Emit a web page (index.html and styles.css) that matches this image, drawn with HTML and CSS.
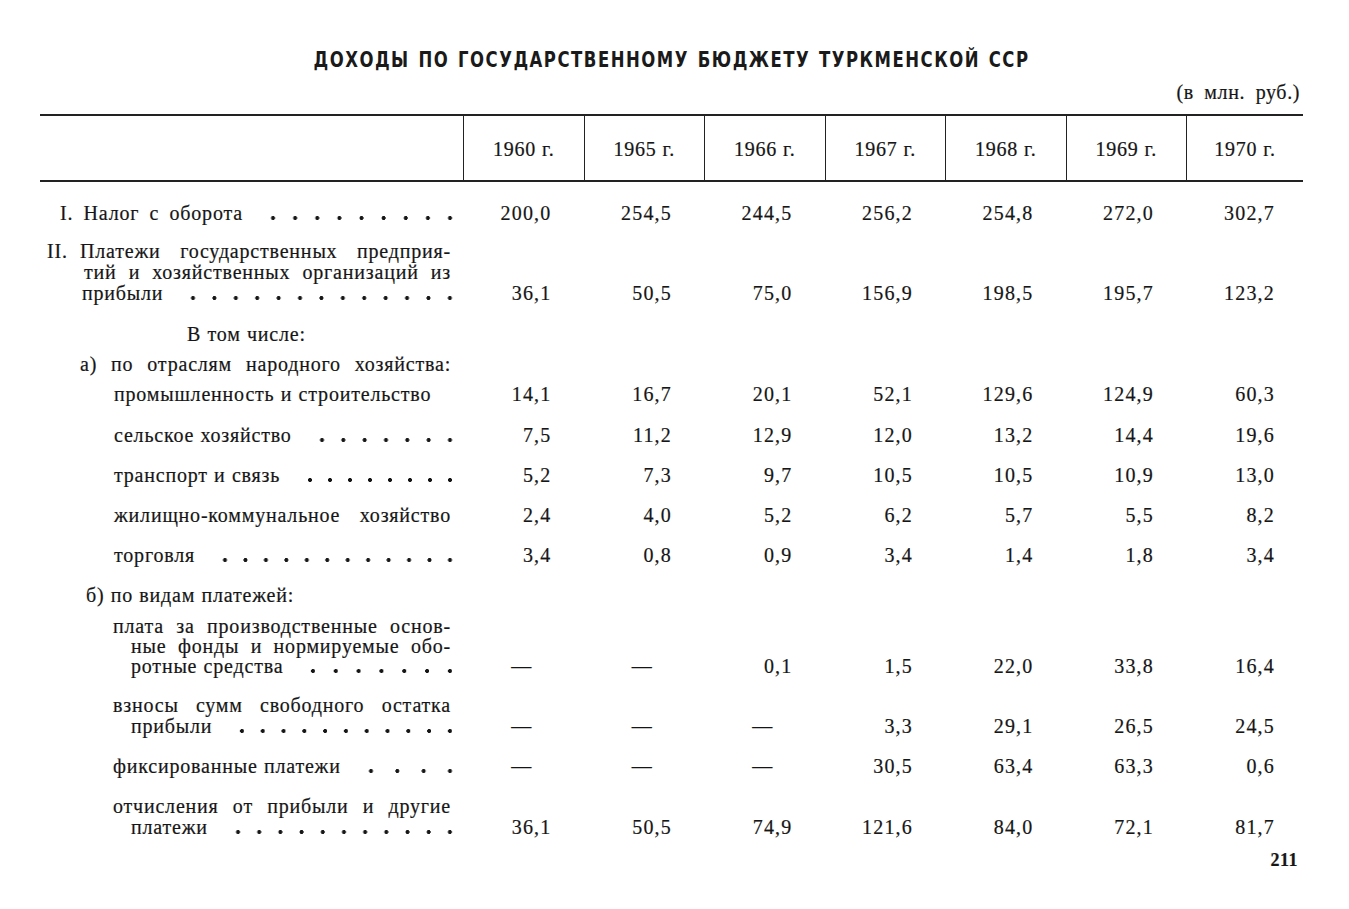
FILE: index.html
```html
<!DOCTYPE html>
<html lang="ru">
<head>
<meta charset="utf-8">
<title>Доходы по государственному бюджету Туркменской ССР</title>
<link rel="stylesheet" href="styles.css">
</head>
<body>
<div class="page">
  <h1 class="title">ДОХОДЫ ПО ГОСУДАРСТВЕННОМУ БЮДЖЕТУ ТУРКМЕНСКОЙ ССР</h1>
  <div class="units">(в млн. руб.)</div>

  <div class="head">
    <div class="hc lblh"></div>
    <div class="hc">1960 г.</div>
    <div class="hc">1965 г.</div>
    <div class="hc">1966 г.</div>
    <div class="hc">1967 г.</div>
    <div class="hc">1968 г.</div>
    <div class="hc">1969 г.</div>
    <div class="hc">1970 г.</div>
  </div>

  <div class="row r1">
    <div class="lbl"><div class="ln lead wide in-20"><span>I. Налог с оборота</span><span class="dots"></span></div></div>
    <div class="v">200,0</div><div class="v">254,5</div><div class="v">244,5</div><div class="v">256,2</div><div class="v">254,8</div><div class="v">272,0</div><div class="v">302,7</div>
  </div>

  <div class="row r2">
    <div class="lbl">
      <div class="ln numline in-7"><span class="num">II.</span><span class="jtxt">Платежи государственных предприя-</span></div>
      <div class="ln just in-44">тий и хозяйственных организаций из</div>
      <div class="ln lead in-42"><span>прибыли</span><span class="dots"></span></div>
    </div>
    <div class="v">36,1</div><div class="v">50,5</div><div class="v">75,0</div><div class="v">156,9</div><div class="v">198,5</div><div class="v">195,7</div><div class="v">123,2</div>
  </div>

  <div class="row r3">
    <div class="lbl"><div class="ln in-147">В том числе:</div></div>
  </div>

  <div class="row tight">
    <div class="lbl"><div class="ln just in-40">а) по отраслям народного хозяйства:</div></div>
  </div>

  <div class="row tight">
    <div class="lbl"><div class="ln in-74">промышленность и строительство</div></div>
    <div class="v">14,1</div><div class="v">16,7</div><div class="v">20,1</div><div class="v">52,1</div><div class="v">129,6</div><div class="v">124,9</div><div class="v">60,3</div>
  </div>

  <div class="row r6">
    <div class="lbl"><div class="ln lead in-74"><span>сельское хозяйство</span><span class="dots"></span></div></div>
    <div class="v">7,5</div><div class="v">11,2</div><div class="v">12,9</div><div class="v">12,0</div><div class="v">13,2</div><div class="v">14,4</div><div class="v">19,6</div>
  </div>

  <div class="row">
    <div class="lbl"><div class="ln lead in-74"><span>транспорт и связь</span><span class="dots"></span></div></div>
    <div class="v">5,2</div><div class="v">7,3</div><div class="v">9,7</div><div class="v">10,5</div><div class="v">10,5</div><div class="v">10,9</div><div class="v">13,0</div>
  </div>

  <div class="row">
    <div class="lbl"><div class="ln just in-74">жилищно-коммунальное хозяйство</div></div>
    <div class="v">2,4</div><div class="v">4,0</div><div class="v">5,2</div><div class="v">6,2</div><div class="v">5,7</div><div class="v">5,5</div><div class="v">8,2</div>
  </div>

  <div class="row">
    <div class="lbl"><div class="ln lead in-74"><span>торговля</span><span class="dots"></span></div></div>
    <div class="v">3,4</div><div class="v">0,8</div><div class="v">0,9</div><div class="v">3,4</div><div class="v">1,4</div><div class="v">1,8</div><div class="v">3,4</div>
  </div>

  <div class="row">
    <div class="lbl"><div class="ln in-46">б) по видам платежей:</div></div>
  </div>

  <div class="row plata lh20">
    <div class="lbl">
      <div class="ln just in-73">плата за производственные основ-</div>
      <div class="ln just in-91">ные фонды и нормируемые обо-</div>
      <div class="ln lead in-91"><span>ротные средства</span><span class="dots"></span></div>
    </div>
    <div class="v dash">—</div><div class="v dash">—</div><div class="v">0,1</div><div class="v">1,5</div><div class="v">22,0</div><div class="v">33,8</div><div class="v">16,4</div>
  </div>

  <div class="row">
    <div class="lbl">
      <div class="ln just in-73">взносы сумм свободного остатка</div>
      <div class="ln lead in-91"><span>прибыли</span><span class="dots"></span></div>
    </div>
    <div class="v dash">—</div><div class="v dash">—</div><div class="v dash">—</div><div class="v">3,3</div><div class="v">29,1</div><div class="v">26,5</div><div class="v">24,5</div>
  </div>

  <div class="row">
    <div class="lbl"><div class="ln lead in-73"><span>фиксированные платежи</span><span class="dots"></span></div></div>
    <div class="v dash">—</div><div class="v dash">—</div><div class="v dash">—</div><div class="v">30,5</div><div class="v">63,4</div><div class="v">63,3</div><div class="v">0,6</div>
  </div>

  <div class="row">
    <div class="lbl">
      <div class="ln just in-73">отчисления от прибыли и другие</div>
      <div class="ln lead in-91"><span>платежи</span><span class="dots"></span></div>
    </div>
    <div class="v">36,1</div><div class="v">50,5</div><div class="v">74,9</div><div class="v">121,6</div><div class="v">84,0</div><div class="v">72,1</div><div class="v">81,7</div>
  </div>

  <div class="pageno">211</div>
</div>
</body>
</html>
```

FILE: styles.css
```css
html, body {
  margin: 0;
  padding: 0;
  background: #ffffff;
}

body {
  color: #161616;
  font-family: "Liberation Serif", "DejaVu Serif", serif;
  font-size: 20px;
  -webkit-text-stroke: 0.2px #161616;
}

.page {
  width: 1263px;
  padding: 48px 0 0 40px;
}

.title {
  margin: 0;
  text-align: center;
  font-family: "DejaVu Sans", sans-serif;
  font-weight: bold;
  font-size: 22px;
  line-height: 24px;
  letter-spacing: 2px;
  word-spacing: 2px;
  color: #1a1a1a;
  -webkit-text-stroke: 0;
  transform: scaleX(0.75);
  transform-origin: center center;
}

.units {
  margin-top: 10px;
  line-height: 20px;
  text-align: right;
  padding-right: 3px;
  letter-spacing: 0.6px;
  word-spacing: 5px;
}

.head,
.row {
  display: grid;
  grid-template-columns: 423px repeat(6, 120.5px) 117px;
}

.head {
  margin-top: 12px;
  border-top: 2px solid #222;
  border-bottom: 2.5px solid #222;
  height: 64px;
}

.hc {
  border-left: 1.5px solid #222;
  display: flex;
  align-items: center;
  justify-content: center;
  letter-spacing: 0.8px;
  padding-top: 2px;
}

.hc.lblh {
  border-left: none;
}

.row {
  margin-top: 19px;
  align-items: end;
  line-height: 21px;
}

.row.r1 { margin-top: 20.5px; }
.row.r2 { margin-top: 17px; }
.row.r3 { margin-top: 20px; }
.row.tight { margin-top: 9px; }
.row.r6 { margin-top: 20px; }
.row.plata { margin-top: 10.5px; }
.row.lh20 { line-height: 20px; }

.lbl {
  padding-right: 12px;
  letter-spacing: 0.8px;
  word-spacing: 0.5px;
}

.ln {
  white-space: nowrap;
}

.ln.wide {
  word-spacing: 4.5px;
}

.ln.just {
  white-space: normal;
  text-align: justify;
  text-align-last: justify;
}

.ln.numline {
  display: flex;
}

.num {
  width: 33px;
  flex: none;
}

.jtxt {
  flex: 1;
  text-align: justify;
  text-align-last: justify;
}

.ln.lead {
  display: flex;
}

.dots {
  flex: 1;
  margin-left: 14px;
  margin-right: -3px;
  background-image: radial-gradient(circle at 16px 15px, #161616 1.7px, rgba(22,22,22,0) 2.3px);
  background-size: 20px 21px;
  background-repeat: space no-repeat;
  background-position: right top;
}

.in-7 { padding-left: 7px; }
.in-20 { padding-left: 20px; }
.in-40 { padding-left: 40px; }
.in-42 { padding-left: 42px; }
.in-44 { padding-left: 44px; }
.in-46 { padding-left: 46px; }
.in-73 { padding-left: 73px; }
.in-74 { padding-left: 74px; }
.in-91 { padding-left: 91px; }
.in-147 { padding-left: 147px; }

.v {
  text-align: right;
  padding-right: 32px;
  letter-spacing: 1.2px;
}

.v:last-child {
  padding-right: 28px;
}

.v.dash {
  text-align: center;
  padding-right: 4px;
  letter-spacing: 0;
}

.pageno {
  margin-top: 10.5px;
  text-align: right;
  padding-right: 5px;
  font-weight: bold;
  font-size: 18px;
  line-height: 22px;
  letter-spacing: 0.5px;
}
```
